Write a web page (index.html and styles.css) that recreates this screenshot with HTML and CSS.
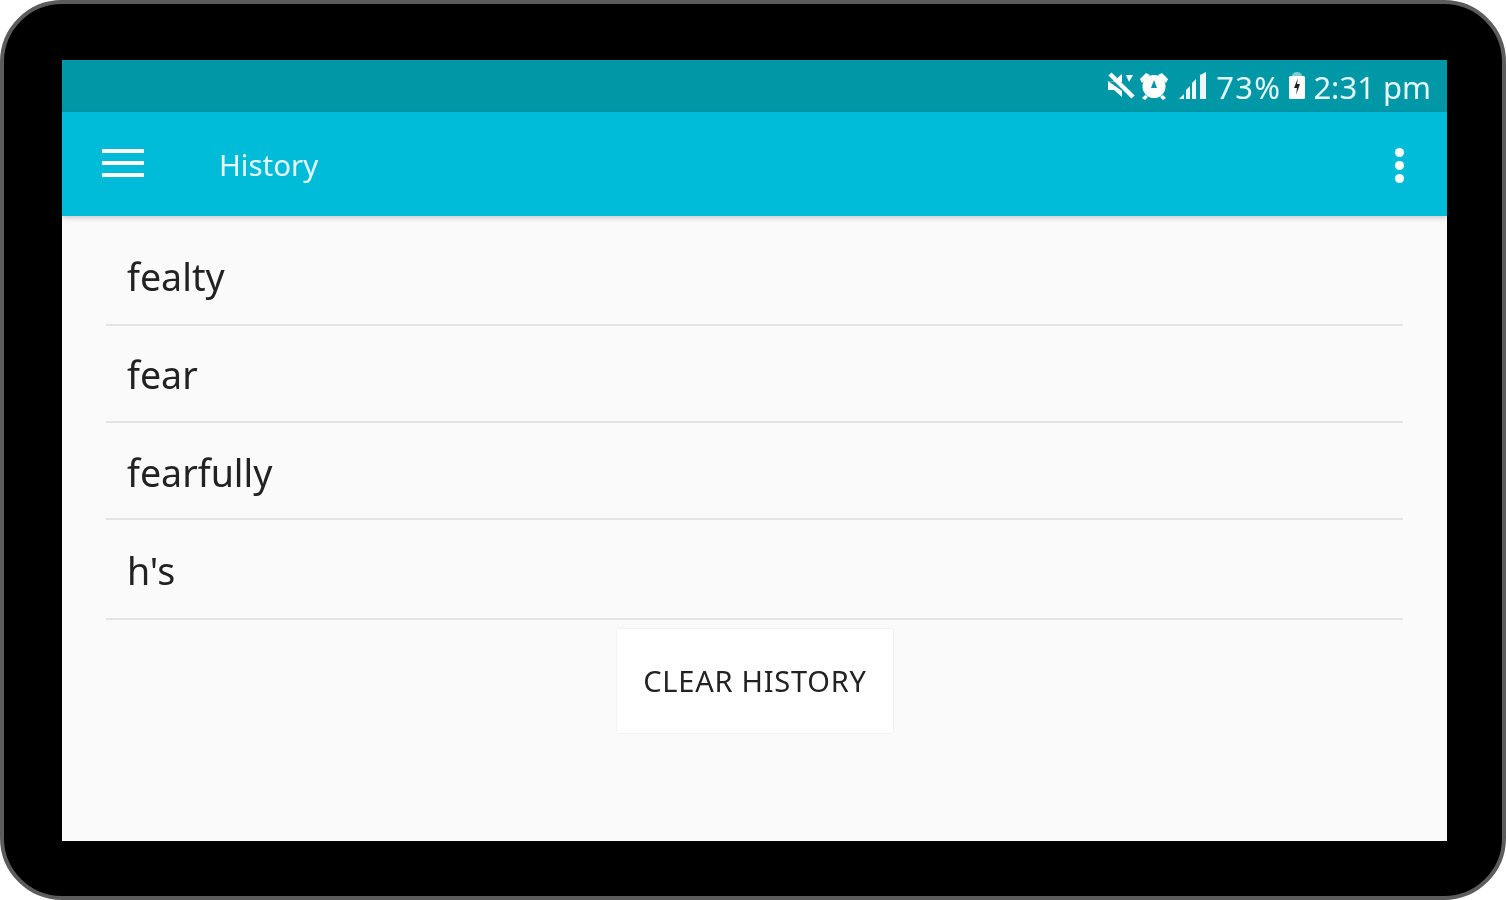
FILE: index.html
```html
<!DOCTYPE html>
<html lang="en">
<head>
    <meta charset="UTF-8">
    <meta name="viewport" content="width=device-width, initial-scale=1.0">
    <title>History</title>
    <link rel="stylesheet" href="styles.css">
</head>
<body>
    <div class="device">
        <div class="screen">
            <div class="status-bar">
                <svg class="icon-mute" viewBox="0 0 28 28" aria-hidden="true">
                    <path d="M1 9h6l8-7v8zM1 9v9h6l8 7v-6z" fill="#fff"/>
                    <path d="M3 2l23 23" stroke="#fff" stroke-width="4.5" fill="none"/>
                    <path d="M19 3h7l-4 7z" fill="#fff"/>
                </svg>
                <svg class="icon-alarm" viewBox="0 0 30 30" aria-hidden="true">
                    <circle cx="15" cy="15.5" r="11.5" fill="#fff"/>
                    <path d="M1 8l6-6 4 2-8 8zM29 8l-6-6-4 2 8 8zM6 24l-3 3 3 2 3-3zM24 24l3 3-3 2-3-3z" fill="#fff"/>
                    <path d="M15 9l-3 8h6z" fill="#0097a7"/>
                </svg>
                <svg class="icon-signal" viewBox="0 0 28 28" aria-hidden="true">
                    <path d="M0 27l5-5v5zM7 27v-9l4-4v13zM13 27v-16l4-4v20zM21 27v-24l6-3v27z" fill="#fff" fill-opacity="0.92"/>
                </svg>
                <span class="status-text status-pct">73%</span>
                <svg class="icon-battery" viewBox="0 0 18 28" aria-hidden="true">
                    <path d="M4 4a5 4 0 0 1 10 0" fill="#7fcbd3"/>
                    <rect x="1" y="4" width="16" height="23" rx="1.5" fill="#fff"/>
                    <path d="M10 6l-4 10h3l-1 7 4-11h-3z" fill="#222"/>
                </svg>
                <span class="status-text">2:31 pm</span>
            </div>
            <header class="app-bar">
                <div class="menu-icon">
                    <span></span>
                    <span></span>
                    <span></span>
                </div>
                <h1 class="app-title">History</h1>
                <div class="more-icon">
                    <span></span>
                    <span></span>
                    <span></span>
                </div>
            </header>
            <main class="content">
                <ul class="history-list">
                    <li>fealty</li>
                    <li>fear</li>
                    <li>fearfully</li>
                    <li>h's</li>
                </ul>
                <button class="clear-btn">CLEAR HISTORY</button>
            </main>
        </div>
    </div>
</body>
</html>
```

FILE: styles.css
```css
html, body {
    margin: 0;
    padding: 0;
    background-color: #fff;
}

/* the reference is an upscaled shot, so everything is a little soft */
.device {
    box-sizing: border-box;
    width: 1506px;
    height: 900px;
    padding: 56px 55px 55px 58px;
    background-color: #000;
    border: 4px solid #5c5c5c;
    border-radius: 62px;
    overflow: hidden;
    filter: blur(0.6px);
}

.screen {
    display: flex;
    flex-direction: column;
    height: 100%;
    background-color: #fafafa;
    font-family: "Noto Sans", "Open Sans", sans-serif;
}

.status-bar {
    display: flex;
    align-items: center;
    justify-content: flex-end;
    height: 52px;
    padding-right: 16px;
    background-color: #0097a7;
    color: #e6f6f8;
}

.status-text {
    font-size: 31px;
    line-height: 52px;
    margin-top: 2px;
}

.status-pct {
    letter-spacing: 1.3px;
}

.icon-mute {
    width: 28px;
    height: 28px;
    margin-right: 4px;
}

.icon-alarm {
    width: 30px;
    height: 30px;
    margin-right: 10px;
}

.icon-signal {
    width: 28px;
    height: 28px;
    margin-right: 9px;
}

.icon-battery {
    width: 18px;
    height: 28px;
    margin: 0 7px 0 7px;
}

.app-bar {
    display: flex;
    align-items: center;
    height: 104px;
    padding: 0 43px 0 40px;
    background-color: #00bcd8;
    box-shadow: 0 2px 5px rgba(0, 0, 0, 0.2);
    position: relative;
}

.menu-icon {
    display: flex;
    flex-direction: column;
    gap: 8px;
    width: 42px;
    margin-top: -2px;
}

.menu-icon span {
    display: block;
    height: 4px;
    background-color: #fff;
}

.app-title {
    flex: 1;
    margin: 0 0 0 75px;
    font-size: 29.5px;
    font-weight: 400;
    color: #e6f8fb;
}

.more-icon {
    display: flex;
    flex-direction: column;
    gap: 4px;
    margin-top: 2px;
}

.more-icon span {
    display: block;
    width: 9px;
    height: 9px;
    border-radius: 50%;
    background-color: #fff;
}

.content {
    display: flex;
    flex-direction: column;
    align-items: center;
    flex: 1;
}

.history-list {
    align-self: stretch;
    margin: 0 44px;
    padding: 13px 0 0;
    list-style: none;
}

.history-list li {
    height: 95px;
    padding-left: 21px;
    font-size: 37.6px;
    line-height: 95px;
    color: #222;
    border-bottom: 2px solid #e4e4e4;
}

.history-list li:nth-child(2) {
    line-height: 97px;
}

.history-list li:nth-child(3) {
    line-height: 99px;
}

.history-list li:nth-child(4) {
    height: 98px;
    line-height: 101px;
}

.clear-btn {
    width: 276px;
    height: 104px;
    margin: 9px 0 0 1px;
    padding: 0 0 2px;
    font-family: "Noto Sans", "Open Sans", sans-serif;
    font-size: 29px;
    letter-spacing: 0.75px;
    color: #222;
    background-color: #fff;
    border: none;
    box-shadow: 0 0 2px rgba(0, 0, 0, 0.1);
}
```
